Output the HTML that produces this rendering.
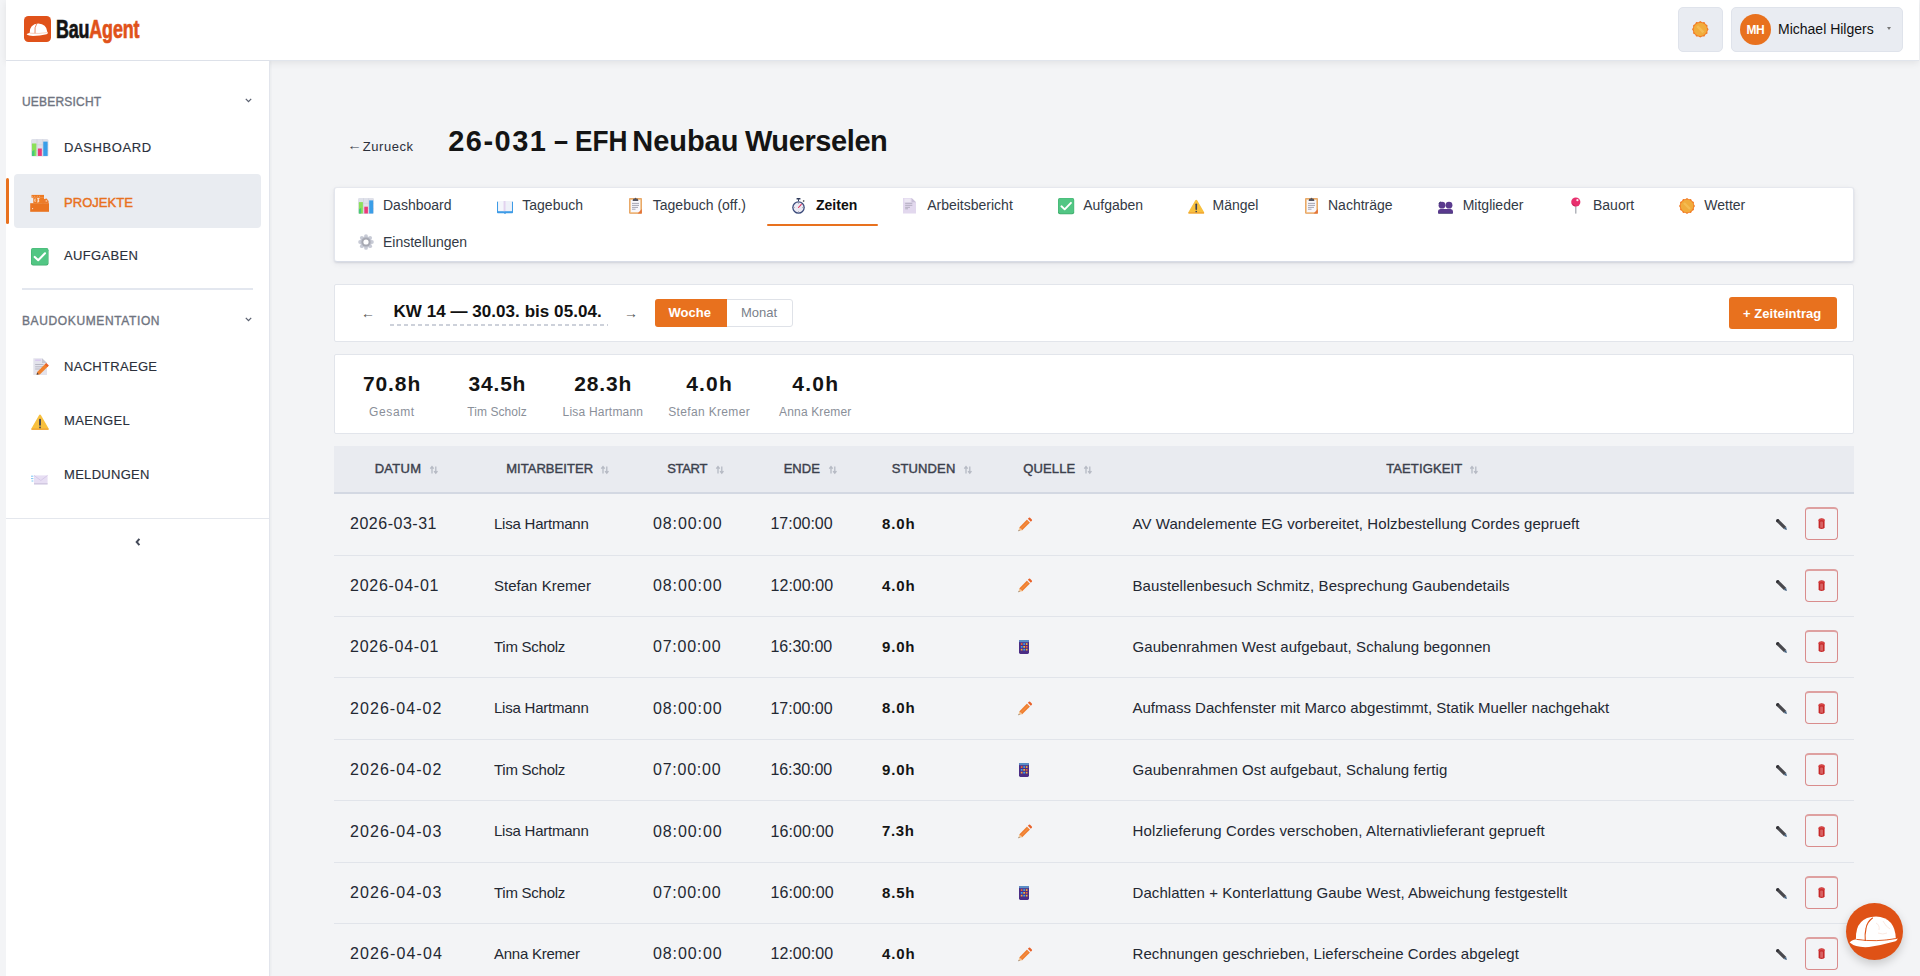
<!DOCTYPE html>
<html><head><meta charset="utf-8">
<style>
*{box-sizing:border-box;margin:0;padding:0}
html,body{width:1920px;height:976px;overflow:hidden;background:#f3f4f6;font-family:"Liberation Sans",sans-serif;color:#1f2937}
.abs{position:absolute}
.t{position:absolute;white-space:nowrap}
svg{position:absolute;overflow:visible}
#header{position:absolute;left:6px;top:0;width:1913px;height:61px;background:#fff;border-bottom:1px solid #e1e5ec;box-shadow:0 2px 7px rgba(0,0,0,.075);z-index:5}
#sidebar{position:absolute;left:6px;top:61px;width:264px;height:915px;background:#fff;border-right:1px solid #e2e5ec;box-shadow:1px 0 2px rgba(40,50,80,.05);z-index:6}
.card{position:absolute;background:#fff;border:1px solid #e2e5eb;border-radius:2px}
</style></head><body>
<div id="header"></div>
<div class="abs" style="z-index:6;left:0;top:0;width:1920px;height:61px">
<svg style="left:24px;top:16px" width="27" height="26" viewBox="0 0 27 26">
<rect x="0" y="0" width="27" height="26" rx="4.5" fill="#e0521a"/>
<path d="M5.6 17.2 Q5.4 8.2 14.4 7.6 Q22.4 8 23.2 15.6 L23.4 17 Q14 18.2 5.6 17.2Z" fill="#fff"/>
<path d="M2.6 18.6 Q3.2 17.2 5.8 17 Q15 18 23.9 16.3 Q24.2 17.6 22.6 18.3 Q16 19.9 9 19.9 Q4.6 19.9 2.6 18.6Z" fill="#fff"/>
<path d="M12.6 8 Q10.4 10.8 11 17.3" stroke="#e0521a" stroke-width=".7" fill="none"/>
<path d="M5.8 17.1 Q15 18.1 23.6 16.5" stroke="#f3b08f" stroke-width=".5" fill="none"/>
</svg>
<div class="t" style="left:56px;top:14.5px;font-size:25px;line-height:28px;font-weight:bold;transform:scaleX(.715);transform-origin:0 0;letter-spacing:-.2px;-webkit-text-stroke:.7px currentColor"><span style="color:#141414;-webkit-text-stroke:.7px #141414">Bau</span><span style="color:#e0521a;-webkit-text-stroke:.7px #e0521a">Agent</span></div>
<div class="abs" style="left:1678px;top:7px;width:45px;height:45px;background:#e9ecf2;border:1px solid #dfe3eb;border-radius:5px"></div>
<svg style="left:1692.2px;top:20.6px" width="16.6" height="16.6" viewBox="0 0 16 16"><polygon points="8.00,0.00 9.84,1.14 12.00,1.07 13.02,2.98 14.93,4.00 14.86,6.16 16.00,8.00 14.86,9.84 14.93,12.00 13.02,13.02 12.00,14.93 9.84,14.86 8.00,16.00 6.16,14.86 4.00,14.93 2.98,13.02 1.07,12.00 1.14,9.84 0.00,8.00 1.14,6.16 1.07,4.00 2.98,2.98 4.00,1.07 6.16,1.14" fill="#f27b24"/><circle cx="8" cy="8" r="6.4" fill="#f1ac3c"/><path d="M5 5 L11 11" stroke="#f8c862" stroke-width="2.4" opacity=".6"/></svg>

<div class="abs" style="left:1731px;top:7px;width:172px;height:45px;background:#e9ecf2;border:1px solid #dfe3eb;border-radius:5px"></div>
<div class="abs" style="left:1740px;top:14px;width:31px;height:31px;border-radius:50%;background:#e8711e"></div>
<div class="t" style="left:1605.5px;width:300px;text-align:center;top:23.84px;font-size:12px;line-height:12px;font-weight:bold;letter-spacing:-0.5px;text-indent:-0.5px;color:#fff;">MH</div>
<div class="t" style="left:1778px;top:22.15px;font-size:14px;line-height:14px;color:#111;">Michael Hilgers</div>
<div class="abs" style="left:1886.5px;top:27px;width:0;height:0;border-left:2.6px solid transparent;border-right:2.6px solid transparent;border-top:3.2px solid #777"></div>
</div>
<div id="sidebar"></div>
<div class="abs" style="z-index:6;left:0;top:0;width:270px;height:976px">
<div class="t" style="left:22px;top:96.14px;font-size:12px;line-height:12px;letter-spacing:0.2px;color:#6f7480;-webkit-text-stroke:.35px #6f7480">UEBERSICHT</div>
<div class="t" style="left:22px;top:315.14px;font-size:12px;line-height:12px;letter-spacing:0.62px;color:#6f7480;-webkit-text-stroke:.35px #6f7480">BAUDOKUMENTATION</div>
<svg style="left:245px;top:98px" width="7" height="5" viewBox="0 0 7 5"><path d="M0.8 0.9 L3.5 3.6 L6.2 0.9" stroke="#5b6170" stroke-width="1.3" fill="none"/></svg>
<svg style="left:245px;top:317px" width="7" height="5" viewBox="0 0 7 5"><path d="M0.8 0.9 L3.5 3.6 L6.2 0.9" stroke="#5b6170" stroke-width="1.3" fill="none"/></svg>
<div class="abs" style="left:14px;top:174px;width:247px;height:54px;background:#e9ecf1;border-radius:4px"></div>
<div class="abs" style="left:6px;top:178px;width:3px;height:46px;background:#e8711e;border-radius:2px"></div>
<div class="t" style="left:64px;top:141.19px;font-size:13px;line-height:13px;letter-spacing:0.6px;color:#2b303b;-webkit-text-stroke:.15px #2b303b">DASHBOARD</div>
<div class="t" style="left:64px;top:195.99px;font-size:13px;line-height:13px;letter-spacing:0.05px;color:#e8711e;-webkit-text-stroke:.45px #e8711e">PROJEKTE</div>
<div class="t" style="left:64px;top:249.29px;font-size:13px;line-height:13px;letter-spacing:0.35px;color:#2b303b;-webkit-text-stroke:.15px #2b303b">AUFGABEN</div>
<div class="t" style="left:64px;top:359.59px;font-size:13px;line-height:13px;letter-spacing:0.3px;color:#2b303b;-webkit-text-stroke:.15px #2b303b">NACHTRAEGE</div>
<div class="t" style="left:64px;top:413.99px;font-size:13px;line-height:13px;letter-spacing:0.35px;color:#2b303b;-webkit-text-stroke:.15px #2b303b">MAENGEL</div>
<div class="t" style="left:64px;top:467.99px;font-size:13px;line-height:13px;letter-spacing:0.3px;color:#2b303b;-webkit-text-stroke:.15px #2b303b">MELDUNGEN</div>
<div class="abs" style="left:22px;top:288px;width:231px;height:2px;background:#e3e7ef"></div>
<div class="abs" style="left:6px;top:518px;width:263px;height:1px;background:#e4e7ed"></div>
<svg style="left:135px;top:538px" width="6" height="8" viewBox="0 0 6 8"><path d="M4.4 0.9 L1.7 4 L4.4 7.1" stroke="#454b5a" stroke-width="2" fill="none"/></svg>
<svg style="left:31px;top:138.7px" width="17.5" height="17.5" viewBox="0 0 16 16"><rect x="0" y="0" width="16" height="16" rx="1.4" fill="#dfe1ea"/><path d="M0.3 5.3H15.7M0.3 10.6H15.7M5.5 0.3V15.7M10.7 0.3V15.7" stroke="#c9ccd8" stroke-width=".5"/><rect x="0.9" y="4.1" width="4" height="11.4" fill="#8be05a"/><path d="M0.9 15.5V11.5L3.2 9.8V15.5Z" fill="#46c97a"/><rect x="6.3" y="8.7" width="3.6" height="6.8" fill="#ec3a78"/><rect x="11.2" y="2.4" width="4" height="13.1" fill="#3a9ee8"/></svg>
<svg style="left:30px;top:195px" width="19" height="17" viewBox="0 0 19 17"><rect x="0.2" y="8.2" width="18.8" height="8.6" fill="#ea7420"/><rect x="1.5" y="-0.1" width="12.5" height="2.8" fill="#ee7a22"/><rect x="3.3" y="2.5" width="10.7" height="5.9" fill="#ee7c24"/><path d="M12 8.4 V4.6 L16.6 3.4 L18.6 6 V8.4Z" fill="#ec7a2a"/><path d="M5.2 3.6 Q4.4 5.2 5.2 6.8 M7.2 3.6 H9.2 L7.6 5.2 Q9.6 5.2 8.6 6.9 L7.1 6.9" stroke="#fff" stroke-width=".85" fill="none"/><circle cx="2.4" cy="1.2" r=".45" fill="#fff" opacity=".6"/><circle cx="4.8" cy="1.2" r=".45" fill="#fff" opacity=".6"/><circle cx="7.2" cy="1.2" r=".45" fill="#fff" opacity=".6"/><circle cx="9.6" cy="1.2" r=".45" fill="#fff" opacity=".6"/><circle cx="2.4" cy="4.4" r=".45" fill="#fff" opacity=".5"/><circle cx="2.4" cy="7.4" r=".45" fill="#fff" opacity=".5"/><circle cx="2.6" cy="13.6" r=".6" fill="#fff" opacity=".8"/><rect x="15.6" y="5.2" width="1.6" height="1.4" fill="#f5c9a8"/></svg>
<svg style="left:31px;top:247.8px" width="17.5" height="17.5" viewBox="0 0 16 16"><rect x="0" y="0" width="16" height="16" rx="2" fill="#3eaa6a"/><rect x="0.4" y="0.2" width="15.2" height="15" rx="1.8" fill="#52c684"/><path d="M3.4 8.2 L6.6 11.2 L12.8 4.8" stroke="#fff" stroke-width="1.9" fill="none" stroke-linecap="round" stroke-linejoin="round"/></svg>
<svg style="left:33px;top:357.5px" width="16" height="17.5" viewBox="0 0 16 17.5"><path d="M0.3 0.3 H9 L14 5 V17 H0.3Z" fill="#e3e3ec"/><path d="M9 0.3 V5 H14Z" fill="#c6c6d2"/><path d="M2.2 6.5 H10.5 M2.2 8.8 H10.5 M2.2 11 H7" stroke="#b3b3c0" stroke-width=".9"/><path d="M2.2 2.2 H8" stroke="#d8c9ef" stroke-width="1.5"/><path d="M3.6 16.6 L4.2 14 L12.6 5.6 L15.2 8.2 L6.8 16.6Z" fill="#f0822e"/><path d="M11.8 6.4 L13.3 4.9 L15.9 7.5 L14.4 9Z" fill="#e8602a"/><path d="M3.6 16.8 L4.2 14.6 L5.8 16.2Z" fill="#444"/></svg>
<svg style="left:31px;top:413.7px" width="18" height="16" viewBox="0 0 18 16"><path d="M9 0.6 Q9.6 0.6 10 1.3 L17.6 14.4 Q18 15.7 16.8 15.7 H1.2 Q0 15.7 0.4 14.4 L8 1.3 Q8.4 0.6 9 0.6Z" fill="#f8c03e"/><path d="M0.6 14.4 H17.4 L17.6 15.7 H0.4Z" fill="#f0a232"/><rect x="8.1" y="4.8" width="1.8" height="7" rx=".8" fill="#3a3f55"/><rect x="8.1" y="12.6" width="1.8" height="1.8" rx=".8" fill="#3a3f55"/></svg>
<svg style="left:31px;top:474.5px" width="17" height="10" viewBox="0 0 17 10"><path d="M3 0.4 H16.6 V9.2 H3Z" fill="#e7def3"/><path d="M3 0.4 L9.8 5.5 L16.6 0.4" stroke="#cfc2e3" stroke-width=".7" fill="none"/><rect x="3" y="8.4" width="13.6" height="1" fill="#c4bcd6"/><path d="M0 1.2 H2.4 M0 3.6 H2.4 M0.5 6 H2.4" stroke="#7cc4f2" stroke-width="1"/></svg>

</div>
<div class="t" style="left:347.3px;top:139.39px;font-size:13px;line-height:13px;color:#3a3f4b;transform:scaleX(1.12);transform-origin:0 0">&#8592;</div>
<div class="t" style="left:362.8px;top:140.09px;font-size:13px;line-height:13px;letter-spacing:0.55px;color:#2b303b;">Zurueck</div>
<div class="t" style="left:448.2px;top:126.85px;font-size:29px;line-height:29px;font-weight:bold;letter-spacing:1.5px;color:#141414;">26-031</div>
<div class="t" style="left:554.1px;top:126.85px;font-size:29px;line-height:29px;font-weight:bold;color:#141414;transform:scaleX(.87);transform-origin:0 0">–</div>
<div class="t" style="left:574.6px;top:126.85px;font-size:29px;line-height:29px;font-weight:bold;color:#141414;transform:scaleX(.905);transform-origin:0 0">EFH</div>
<div class="t" style="left:632.3px;top:126.85px;font-size:29px;line-height:29px;font-weight:bold;letter-spacing:-0.05px;color:#141414;">Neubau</div>
<div class="t" style="left:744.9px;top:126.85px;font-size:29px;line-height:29px;font-weight:bold;letter-spacing:-0.4px;color:#141414;">Wuerselen</div>
<div class="card" style="left:334px;top:187px;width:1520px;height:75px;border-color:#e6e8ee #e3e6ed #d8dce6;border-radius:3px;box-shadow:0 1px 2px rgba(30,40,70,.12),0 2px 6px rgba(30,40,70,.06)"></div>
<div class="t" style="left:383px;top:198.45px;font-size:14px;line-height:14px;color:#333a45;">Dashboard</div>
<div class="t" style="left:522.3px;top:198.45px;font-size:14px;line-height:14px;color:#333a45;">Tagebuch</div>
<div class="t" style="left:652.8px;top:198.45px;font-size:14px;line-height:14px;color:#333a45;">Tagebuch (off.)</div>
<div class="t" style="left:816px;top:198.45px;font-size:14px;line-height:14px;font-weight:bold;color:#111;">Zeiten</div>
<div class="t" style="left:927.2px;top:198.45px;font-size:14px;line-height:14px;color:#333a45;">Arbeitsbericht</div>
<div class="t" style="left:1083.2px;top:198.45px;font-size:14px;line-height:14px;color:#333a45;">Aufgaben</div>
<div class="t" style="left:1212.5px;top:198.45px;font-size:14px;line-height:14px;color:#333a45;">Mängel</div>
<div class="t" style="left:1328px;top:198.45px;font-size:14px;line-height:14px;color:#333a45;">Nachträge</div>
<div class="t" style="left:1462.7px;top:198.45px;font-size:14px;line-height:14px;color:#333a45;">Mitglieder</div>
<div class="t" style="left:1593px;top:198.45px;font-size:14px;line-height:14px;color:#333a45;">Bauort</div>
<div class="t" style="left:1704.3px;top:198.45px;font-size:14px;line-height:14px;color:#333a45;">Wetter</div>
<div class="t" style="left:383px;top:235.05px;font-size:14px;line-height:14px;color:#333a45;">Einstellungen</div>
<div class="abs" style="left:767px;top:224px;width:111px;height:2px;background:#e8711e;border-radius:1px"></div>
<svg style="left:358px;top:197.5px" width="16" height="16" viewBox="0 0 16 16"><rect x="0" y="0" width="16" height="16" rx="1.4" fill="#dfe1ea"/><path d="M0.3 5.3H15.7M0.3 10.6H15.7M5.5 0.3V15.7M10.7 0.3V15.7" stroke="#c9ccd8" stroke-width=".5"/><rect x="0.9" y="4.1" width="4" height="11.4" fill="#8be05a"/><path d="M0.9 15.5V11.5L3.2 9.8V15.5Z" fill="#46c97a"/><rect x="6.3" y="8.7" width="3.6" height="6.8" fill="#ec3a78"/><rect x="11.2" y="2.4" width="4" height="13.1" fill="#3a9ee8"/></svg>
<svg style="left:497px;top:201.2px" width="16" height="13" viewBox="0 0 16 13"><path d="M0 1 Q0 0.4 .8 .4 L1.2 .4 V10 H14.8 V.4 L15.2 .4 Q16 .4 16 1 V11.6 Q16 12.2 15.2 12.2 H9 Q8.6 12.9 8 12.9 Q7.4 12.9 7 12.2 H.8 Q0 12.2 0 11.6Z" fill="#3d9be6"/><path d="M1.2 0 H7.6 V10.2 H1.2Z" fill="#f4f6fb"/><path d="M8.4 0 H14.8 V10.2 H8.4Z" fill="#eef1f8"/><rect x="6.6" y="0" width="2" height="10.2" fill="#e2d3ee"/></svg>
<svg style="left:629px;top:197.2px" width="13" height="17" viewBox="0 0 13 17"><rect x="0" y="1" width="13" height="15.8" rx="1.2" fill="#e39a58"/><rect x=".5" y="1.5" width="12" height="14.8" rx="1" fill="#f0b878"/><rect x="1.7" y="2.8" width="9.6" height="12.4" fill="#f7f7fc"/><path d="M3 6.4 H10 M3 8.4 H10 M3 10.4 H9 M3 12.2 H6.5" stroke="#9c9cab" stroke-width=".9"/><path d="M3.6 4 L4.2 1.8 H5.4 Q6.5 -.4 7.6 1.8 H8.8 L9.4 4Z" fill="#55555f"/><path d="M8.6 16.6 L12.8 12 V16.6Z" fill="#e3743a"/></svg>
<svg style="left:792.3px;top:198px" width="13" height="16" viewBox="0 0 13 16"><rect x="4.5" y="0" width="4" height="1.4" rx=".5" fill="#2f3a5a"/><rect x="6" y="1.2" width="1" height="2" fill="#2f3a5a"/><path d="M10.6 3 L11.8 2 L12.6 3 L11.6 4Z" fill="#444"/><circle cx="6.5" cy="9.5" r="6.3" fill="#3a4a7a"/><circle cx="6.5" cy="9.5" r="5" fill="#eceaf4"/><path d="M6.5 9.5 L9.3 6.3" stroke="#e5345f" stroke-width="1.1" stroke-linecap="round"/><path d="M6.5 5.2V5.9M6.5 13.1V13.8M2.2 9.5H2.9M10.1 9.5H10.8" stroke="#555" stroke-width=".5"/></svg>
<svg style="left:903.4px;top:198px" width="13" height="16" viewBox="0 0 13 16"><path d="M0 0 H8.6 L13 4.2 V15.6 H0Z" fill="#e2d8ee"/><path d="M8.6 0 V4.2 H13Z" fill="#c9c0d8"/><rect x="1.4" y="0.6" width="6.2" height="3.6" fill="#ede8f4"/><path d="M2.2 5.3 H9.3 M2.2 7.3 H9.3 M2.2 9.3 H7 M2.2 10.8 H5" stroke="#a9a6b6" stroke-width=".85"/></svg>
<svg style="left:1057.7px;top:198px" width="16.2" height="16.2" viewBox="0 0 16 16"><rect x="0" y="0" width="16" height="16" rx="2" fill="#3eaa6a"/><rect x="0.4" y="0.2" width="15.2" height="15" rx="1.8" fill="#52c684"/><path d="M3.4 8.2 L6.6 11.2 L12.8 4.8" stroke="#fff" stroke-width="1.9" fill="none" stroke-linecap="round" stroke-linejoin="round"/></svg>
<svg style="left:1187.5px;top:198.5px" width="16.5" height="15" viewBox="0 0 18 16"><path d="M9 0.6 Q9.6 0.6 10 1.3 L17.6 14.4 Q18 15.7 16.8 15.7 H1.2 Q0 15.7 0.4 14.4 L8 1.3 Q8.4 0.6 9 0.6Z" fill="#f8c03e"/><path d="M0.6 14.4 H17.4 L17.6 15.7 H0.4Z" fill="#f0a232"/><rect x="8.1" y="4.8" width="1.8" height="7" rx=".8" fill="#3a3f55"/><rect x="8.1" y="12.6" width="1.8" height="1.8" rx=".8" fill="#3a3f55"/></svg>
<svg style="left:1305px;top:197.2px" width="13" height="17" viewBox="0 0 13 17"><rect x="0" y="1" width="13" height="15.8" rx="1.2" fill="#e39a58"/><rect x=".5" y="1.5" width="12" height="14.8" rx="1" fill="#f0b878"/><rect x="1.7" y="2.8" width="9.6" height="12.4" fill="#f7f7fc"/><path d="M3 6.4 H10 M3 8.4 H10 M3 10.4 H9 M3 12.2 H6.5" stroke="#9c9cab" stroke-width=".9"/><path d="M3.6 4 L4.2 1.8 H5.4 Q6.5 -.4 7.6 1.8 H8.8 L9.4 4Z" fill="#55555f"/><path d="M8.6 16.6 L12.8 12 V16.6Z" fill="#e3743a"/></svg>
<svg style="left:1437.8px;top:201px" width="15" height="13" viewBox="0 0 15 13"><circle cx="4" cy="4.2" r="3.4" fill="#5a3a8e"/><circle cx="11" cy="4.2" r="3.4" fill="#5a3a8e"/><path d="M0 12.6 V10.2 Q0 8.2 2.4 8 H12.6 Q15 8.2 15 10.2 V12.6Z" fill="#5a3a8e"/><path d="M0.6 12.4 H14.4" stroke="#2e2f5c" stroke-width=".6"/><path d="M1 3 Q1 1 3 .9" stroke="#2f2f5f" stroke-width=".8" fill="none"/></svg>
<svg style="left:1571.4px;top:197px" width="10" height="17" viewBox="0 0 10 17"><rect x="4.2" y="8" width="1.2" height="8.6" fill="#9fa2ab"/><circle cx="4.8" cy="5" r="4.6" fill="#e8306e"/><circle cx="6.4" cy="3.2" r="1.1" fill="#fbe9ef"/><path d="M1.2 6.6 Q2.2 8.6 4.2 9" stroke="#b8234f" stroke-width=".8" fill="none"/></svg>
<svg style="left:1679px;top:197.7px" width="16" height="16" viewBox="0 0 16 16"><polygon points="8.00,0.00 9.84,1.14 12.00,1.07 13.02,2.98 14.93,4.00 14.86,6.16 16.00,8.00 14.86,9.84 14.93,12.00 13.02,13.02 12.00,14.93 9.84,14.86 8.00,16.00 6.16,14.86 4.00,14.93 2.98,13.02 1.07,12.00 1.14,9.84 0.00,8.00 1.14,6.16 1.07,4.00 2.98,2.98 4.00,1.07 6.16,1.14" fill="#f27b24"/><circle cx="8" cy="8" r="6.4" fill="#f1ac3c"/><path d="M5 5 L11 11" stroke="#f8c862" stroke-width="2.4" opacity=".6"/></svg>
<svg style="left:358px;top:234px" width="16" height="16" viewBox="0 0 16 16"><circle cx="13.90" cy="8.00" r="1.9" fill="#c8cbd6"/><circle cx="12.17" cy="12.17" r="1.9" fill="#c8cbd6"/><circle cx="8.00" cy="13.90" r="1.9" fill="#c8cbd6"/><circle cx="3.83" cy="12.17" r="1.9" fill="#c8cbd6"/><circle cx="2.10" cy="8.00" r="1.9" fill="#c8cbd6"/><circle cx="3.83" cy="3.83" r="1.9" fill="#c8cbd6"/><circle cx="8.00" cy="2.10" r="1.9" fill="#c8cbd6"/><circle cx="12.17" cy="3.83" r="1.9" fill="#c8cbd6"/><circle cx="8" cy="8" r="5.8" fill="#c4c7d2"/><circle cx="8" cy="8" r="4.6" fill="#a6a8b2"/><circle cx="8" cy="8" r="2.6" fill="#fff"/></svg>

<div class="card" style="left:334px;top:284px;width:1520px;height:58px"></div>
<div class="t" style="left:361px;top:306.15px;font-size:14px;line-height:14px;color:#555;">&#8592;</div>
<div class="t" style="left:393.5px;top:302.91px;font-size:17px;line-height:17px;font-weight:bold;letter-spacing:0.05px;color:#111;">KW 14 — 30.03. bis 05.04.</div>
<div class="abs" style="left:390px;top:323.5px;width:218px;height:2px;background:repeating-linear-gradient(90deg,#cdd1da 0 4px,transparent 4px 7px)"></div>
<div class="t" style="left:624px;top:306.15px;font-size:14px;line-height:14px;color:#555;">&#8594;</div>
<div class="abs" style="left:655px;top:299px;width:138px;height:28px;border:1px solid #dfe2e8;border-radius:3px;background:#fff"></div>
<div class="abs" style="left:655px;top:299px;width:72px;height:28px;background:#e8711e;border-radius:3px 0 0 3px"></div>
<div class="t" style="left:668.5px;top:306.49px;font-size:13px;line-height:13px;font-weight:bold;color:#fff;">Woche</div>
<div class="t" style="left:741px;top:306.49px;font-size:13px;line-height:13px;color:#7a7f8a;">Monat</div>
<div class="abs" style="left:1729px;top:297px;width:108px;height:32px;background:#e8711e;border-radius:3px"></div>
<div class="t" style="left:1743px;top:307.29px;font-size:13px;line-height:13px;font-weight:bold;letter-spacing:0.05px;color:#fff;">+ Zeiteintrag</div>
<div class="card" style="left:334px;top:354px;width:1520px;height:80px"></div>
<div class="t" style="left:241.60000000000002px;width:300px;text-align:center;top:373.02px;font-size:21px;line-height:21px;font-weight:bold;letter-spacing:0.9px;text-indent:0.9px;color:#141414;">70.8h</div>
<div class="t" style="left:241.60000000000002px;width:300px;text-align:center;top:405.54px;font-size:12px;line-height:12px;letter-spacing:0.6px;text-indent:0.6px;color:#8a8f99;">Gesamt</div>
<div class="t" style="left:347px;width:300px;text-align:center;top:373.02px;font-size:21px;line-height:21px;font-weight:bold;letter-spacing:0.8px;text-indent:0.8px;color:#141414;">34.5h</div>
<div class="t" style="left:347px;width:300px;text-align:center;top:405.54px;font-size:12px;line-height:12px;letter-spacing:0.07px;text-indent:0.07px;color:#8a8f99;">Tim Scholz</div>
<div class="t" style="left:452.79999999999995px;width:300px;text-align:center;top:373.02px;font-size:21px;line-height:21px;font-weight:bold;letter-spacing:0.8px;text-indent:0.8px;color:#141414;">28.3h</div>
<div class="t" style="left:452.79999999999995px;width:300px;text-align:center;top:405.54px;font-size:12px;line-height:12px;letter-spacing:0.2px;text-indent:0.2px;color:#8a8f99;">Lisa Hartmann</div>
<div class="t" style="left:559px;width:300px;text-align:center;top:373.02px;font-size:21px;line-height:21px;font-weight:bold;letter-spacing:1.2px;text-indent:1.2px;color:#141414;">4.0h</div>
<div class="t" style="left:559px;width:300px;text-align:center;top:405.54px;font-size:12px;line-height:12px;letter-spacing:0.34px;text-indent:0.34px;color:#8a8f99;">Stefan Kremer</div>
<div class="t" style="left:665.2px;width:300px;text-align:center;top:373.02px;font-size:21px;line-height:21px;font-weight:bold;letter-spacing:1.2px;text-indent:1.2px;color:#141414;">4.0h</div>
<div class="t" style="left:665.2px;width:300px;text-align:center;top:405.54px;font-size:12px;line-height:12px;letter-spacing:0.15px;text-indent:0.15px;color:#8a8f99;">Anna Kremer</div>
<div class="abs" style="left:334px;top:445.6px;width:1520px;height:48.4px;background:#e9ebf0;border-bottom:2px solid #d3d8e2"></div>
<div class="t" style="left:374.7px;top:462.29px;font-size:13px;line-height:13px;letter-spacing:0.26px;color:#3b404c;-webkit-text-stroke:.4px #3b404c">DATUM</div>
<div class="t" style="left:506.2px;top:462.29px;font-size:13px;line-height:13px;letter-spacing:0.04px;color:#3b404c;-webkit-text-stroke:.4px #3b404c">MITARBEITER</div>
<div class="t" style="left:667.2px;top:462.29px;font-size:13px;line-height:13px;letter-spacing:-0.3px;color:#3b404c;-webkit-text-stroke:.4px #3b404c">START</div>
<div class="t" style="left:783.7px;top:462.29px;font-size:13px;line-height:13px;color:#3b404c;-webkit-text-stroke:.4px #3b404c">ENDE</div>
<div class="t" style="left:891.7px;top:462.29px;font-size:13px;line-height:13px;letter-spacing:0.13px;color:#3b404c;-webkit-text-stroke:.4px #3b404c">STUNDEN</div>
<div class="t" style="left:1023.2px;top:462.29px;font-size:13px;line-height:13px;letter-spacing:0.16px;color:#3b404c;-webkit-text-stroke:.4px #3b404c">QUELLE</div>
<div class="t" style="left:1386.2px;top:462.29px;font-size:13px;line-height:13px;letter-spacing:0.12px;color:#3b404c;-webkit-text-stroke:.4px #3b404c">TAETIGKEIT</div>
<svg style="left:430px;top:465.8px" width="8" height="7.6" viewBox="0 0 8 7.6"><path d="M2 7.4 V1.4 M0.3 2.6 L2 .6 L3.7 2.6" stroke="#b6bac4" stroke-width="1.3" fill="none"/><path d="M5.8 .4 V6.4 M4.1 5.2 L5.8 7.2 L7.5 5.2" stroke="#b6bac4" stroke-width="1.3" fill="none"/></svg>
<svg style="left:600.8px;top:465.8px" width="8" height="7.6" viewBox="0 0 8 7.6"><path d="M2 7.4 V1.4 M0.3 2.6 L2 .6 L3.7 2.6" stroke="#b6bac4" stroke-width="1.3" fill="none"/><path d="M5.8 .4 V6.4 M4.1 5.2 L5.8 7.2 L7.5 5.2" stroke="#b6bac4" stroke-width="1.3" fill="none"/></svg>
<svg style="left:715.9px;top:465.8px" width="8" height="7.6" viewBox="0 0 8 7.6"><path d="M2 7.4 V1.4 M0.3 2.6 L2 .6 L3.7 2.6" stroke="#b6bac4" stroke-width="1.3" fill="none"/><path d="M5.8 .4 V6.4 M4.1 5.2 L5.8 7.2 L7.5 5.2" stroke="#b6bac4" stroke-width="1.3" fill="none"/></svg>
<svg style="left:828.5px;top:465.8px" width="8" height="7.6" viewBox="0 0 8 7.6"><path d="M2 7.4 V1.4 M0.3 2.6 L2 .6 L3.7 2.6" stroke="#b6bac4" stroke-width="1.3" fill="none"/><path d="M5.8 .4 V6.4 M4.1 5.2 L5.8 7.2 L7.5 5.2" stroke="#b6bac4" stroke-width="1.3" fill="none"/></svg>
<svg style="left:964.4px;top:465.8px" width="8" height="7.6" viewBox="0 0 8 7.6"><path d="M2 7.4 V1.4 M0.3 2.6 L2 .6 L3.7 2.6" stroke="#b6bac4" stroke-width="1.3" fill="none"/><path d="M5.8 .4 V6.4 M4.1 5.2 L5.8 7.2 L7.5 5.2" stroke="#b6bac4" stroke-width="1.3" fill="none"/></svg>
<svg style="left:1083.6px;top:465.8px" width="8" height="7.6" viewBox="0 0 8 7.6"><path d="M2 7.4 V1.4 M0.3 2.6 L2 .6 L3.7 2.6" stroke="#b6bac4" stroke-width="1.3" fill="none"/><path d="M5.8 .4 V6.4 M4.1 5.2 L5.8 7.2 L7.5 5.2" stroke="#b6bac4" stroke-width="1.3" fill="none"/></svg>
<svg style="left:1469.5px;top:465.8px" width="8" height="7.6" viewBox="0 0 8 7.6"><path d="M2 7.4 V1.4 M0.3 2.6 L2 .6 L3.7 2.6" stroke="#b6bac4" stroke-width="1.3" fill="none"/><path d="M5.8 .4 V6.4 M4.1 5.2 L5.8 7.2 L7.5 5.2" stroke="#b6bac4" stroke-width="1.3" fill="none"/></svg>

<div class="abs" style="left:334px;top:554.60px;width:1520px;height:1px;background:#e1e4ea"></div>
<div class="t" style="left:350px;top:516.45px;font-size:16px;line-height:16px;letter-spacing:0.51px;color:#232832;">2026-03-31</div>
<div class="t" style="left:494px;top:516.10px;font-size:15px;line-height:15px;letter-spacing:-0.23px;color:#232832;">Lisa Hartmann</div>
<div class="t" style="left:653px;top:516.45px;font-size:16px;line-height:16px;letter-spacing:0.9px;color:#232832;">08:00:00</div>
<div class="t" style="left:770.5px;top:516.45px;font-size:16px;line-height:16px;letter-spacing:-0.03px;color:#232832;">17:00:00</div>
<div class="t" style="left:882px;top:516.10px;font-size:15px;line-height:15px;font-weight:bold;letter-spacing:0.9px;color:#141414;">8.0h</div>
<div class="t" style="left:1132.5px;top:516.10px;font-size:15px;line-height:15px;letter-spacing:0.07px;color:#232832;">AV Wandelemente EG vorbereitet, Holzbestellung Cordes geprueft</div>
<svg style="left:1016.8px;top:517.0px" width="15.5" height="15.5" viewBox="0 0 15.5 15.5"><g transform="translate(0.3,0.3)"><path d="M4.9 13.06 L1.94 10.1 L9.72 2.32 L12.68 5.28Z" fill="#ef7d2e"/><path d="M3.4 11.6 L11.2 3.8" stroke="#f59a52" stroke-width=".9"/><path d="M9.72 2.32 L10.57 1.47 L13.53 4.43 L12.68 5.28Z" fill="#f1eef4"/><path d="M10.57 1.47 L11.6 .44 Q12.2 -.1 12.8 .5 L14.5 2.2 Q15.1 2.8 14.56 3.4 L13.53 4.43Z" fill="#e8622a"/><path d="M4.9 13.06 L1.94 10.1 L1.0 14.0Z" fill="#f3c594"/><path d="M1.6 12.6 L2.4 13.4 L1.0 14.0Z" fill="#555"/></g></svg>
<svg style="left:1775.5px;top:519.0px" width="11" height="11" viewBox="0 0 11 11"><path d="M0.2 2.5 L2.5 0.2 L10.1 7.8 L7.8 10.1Z" fill="#48484d"/><path d="M0.2 2.5 Q-.3 1.2 .5 .5 Q1.2 -.3 2.5 .2 L3.3 1 L1 3.3Z" fill="#2e2e33"/><path d="M7.8 10.1 L10.1 7.8 L10.9 10.9Z" fill="#3a5a7a"/></svg>
<svg style="left:1817.6px;top:518.4px" width="7.2" height="11" viewBox="0 0 7.2 11"><path d="M0.6 2 Q0.6 .2 3.6 .2 Q6.6 .2 6.6 2 V9.6 Q6.6 10.9 3.6 10.9 Q0.6 10.9 0.6 9.6Z" fill="#c62828"/><path d="M0.2 2.2 Q0.6 .9 3.6 .9 Q6.6 .9 7 2.2 L6.8 2.7 Q3.6 2 .4 2.7Z" fill="#d94a4a"/><rect x="2.2" y="3.4" width="2.8" height="6.4" rx=".6" fill="#dd7777" opacity=".75"/></svg>

<div class="abs" style="left:1805px;top:507.20px;width:33px;height:33px;border:1px solid #d98c8c;border-top:2px solid #dea0a0;border-radius:4px"></div>
<div class="abs" style="left:334px;top:616.02px;width:1520px;height:1px;background:#e1e4ea"></div>
<div class="t" style="left:350px;top:577.87px;font-size:16px;line-height:16px;letter-spacing:0.73px;color:#232832;">2026-04-01</div>
<div class="t" style="left:494px;top:577.52px;font-size:15px;line-height:15px;letter-spacing:0.02px;color:#232832;">Stefan Kremer</div>
<div class="t" style="left:653px;top:577.87px;font-size:16px;line-height:16px;letter-spacing:0.9px;color:#232832;">08:00:00</div>
<div class="t" style="left:770.5px;top:577.87px;font-size:16px;line-height:16px;letter-spacing:0.04px;color:#232832;">12:00:00</div>
<div class="t" style="left:882px;top:577.52px;font-size:15px;line-height:15px;font-weight:bold;letter-spacing:0.9px;color:#141414;">4.0h</div>
<div class="t" style="left:1132.5px;top:577.52px;font-size:15px;line-height:15px;letter-spacing:0.07px;color:#232832;">Baustellenbesuch Schmitz, Besprechung Gaubendetails</div>
<svg style="left:1016.8px;top:578.42px" width="15.5" height="15.5" viewBox="0 0 15.5 15.5"><g transform="translate(0.3,0.3)"><path d="M4.9 13.06 L1.94 10.1 L9.72 2.32 L12.68 5.28Z" fill="#ef7d2e"/><path d="M3.4 11.6 L11.2 3.8" stroke="#f59a52" stroke-width=".9"/><path d="M9.72 2.32 L10.57 1.47 L13.53 4.43 L12.68 5.28Z" fill="#f1eef4"/><path d="M10.57 1.47 L11.6 .44 Q12.2 -.1 12.8 .5 L14.5 2.2 Q15.1 2.8 14.56 3.4 L13.53 4.43Z" fill="#e8622a"/><path d="M4.9 13.06 L1.94 10.1 L1.0 14.0Z" fill="#f3c594"/><path d="M1.6 12.6 L2.4 13.4 L1.0 14.0Z" fill="#555"/></g></svg>
<svg style="left:1775.5px;top:580.42px" width="11" height="11" viewBox="0 0 11 11"><path d="M0.2 2.5 L2.5 0.2 L10.1 7.8 L7.8 10.1Z" fill="#48484d"/><path d="M0.2 2.5 Q-.3 1.2 .5 .5 Q1.2 -.3 2.5 .2 L3.3 1 L1 3.3Z" fill="#2e2e33"/><path d="M7.8 10.1 L10.1 7.8 L10.9 10.9Z" fill="#3a5a7a"/></svg>
<svg style="left:1817.6px;top:579.8199999999999px" width="7.2" height="11" viewBox="0 0 7.2 11"><path d="M0.6 2 Q0.6 .2 3.6 .2 Q6.6 .2 6.6 2 V9.6 Q6.6 10.9 3.6 10.9 Q0.6 10.9 0.6 9.6Z" fill="#c62828"/><path d="M0.2 2.2 Q0.6 .9 3.6 .9 Q6.6 .9 7 2.2 L6.8 2.7 Q3.6 2 .4 2.7Z" fill="#d94a4a"/><rect x="2.2" y="3.4" width="2.8" height="6.4" rx=".6" fill="#dd7777" opacity=".75"/></svg>

<div class="abs" style="left:1805px;top:568.62px;width:33px;height:33px;border:1px solid #d98c8c;border-top:2px solid #dea0a0;border-radius:4px"></div>
<div class="abs" style="left:334px;top:677.44px;width:1520px;height:1px;background:#e1e4ea"></div>
<div class="t" style="left:350px;top:639.29px;font-size:16px;line-height:16px;letter-spacing:0.73px;color:#232832;">2026-04-01</div>
<div class="t" style="left:494px;top:638.94px;font-size:15px;line-height:15px;letter-spacing:-0.26px;color:#232832;">Tim Scholz</div>
<div class="t" style="left:653px;top:639.29px;font-size:16px;line-height:16px;letter-spacing:0.76px;color:#232832;">07:00:00</div>
<div class="t" style="left:770.5px;top:639.29px;font-size:16px;line-height:16px;letter-spacing:-0.1px;color:#232832;">16:30:00</div>
<div class="t" style="left:882px;top:638.94px;font-size:15px;line-height:15px;font-weight:bold;letter-spacing:0.83px;color:#141414;">9.0h</div>
<div class="t" style="left:1132.5px;top:638.94px;font-size:15px;line-height:15px;letter-spacing:0.07px;color:#232832;">Gaubenrahmen West aufgebaut, Schalung begonnen</div>
<svg style="left:1019px;top:640.14px" width="10" height="14" viewBox="0 0 10 14"><rect x="0" y="0" width="10" height="14" rx="1.4" fill="#4b2d85"/><rect x="0" y="0" width="10" height="2.2" rx="1" fill="#5b8ec6"/><rect x="1.8" y="3.2" width="1.7" height="1.7" fill="#f26a35"/><rect x="4.3" y="3.2" width="1.7" height="1.7" fill="#3aa6f0"/><rect x="6.8" y="3.2" width="1.7" height="1.7" fill="#f7b73c"/><rect x="1.8" y="6.0" width="1.7" height="1.7" fill="#3aa6f0"/><rect x="4.3" y="6.0" width="1.7" height="1.7" fill="#f7b73c"/><rect x="6.8" y="6.0" width="1.7" height="1.7" fill="#f26a35"/><rect x="1.8" y="8.8" width="1.7" height="1.7" fill="#f7a03c"/><rect x="4.3" y="8.8" width="1.7" height="1.7" fill="#3aa6f0"/><rect x="6.8" y="8.8" width="1.7" height="1.7" fill="#f7b73c"/></svg>
<svg style="left:1775.5px;top:641.84px" width="11" height="11" viewBox="0 0 11 11"><path d="M0.2 2.5 L2.5 0.2 L10.1 7.8 L7.8 10.1Z" fill="#48484d"/><path d="M0.2 2.5 Q-.3 1.2 .5 .5 Q1.2 -.3 2.5 .2 L3.3 1 L1 3.3Z" fill="#2e2e33"/><path d="M7.8 10.1 L10.1 7.8 L10.9 10.9Z" fill="#3a5a7a"/></svg>
<svg style="left:1817.6px;top:641.24px" width="7.2" height="11" viewBox="0 0 7.2 11"><path d="M0.6 2 Q0.6 .2 3.6 .2 Q6.6 .2 6.6 2 V9.6 Q6.6 10.9 3.6 10.9 Q0.6 10.9 0.6 9.6Z" fill="#c62828"/><path d="M0.2 2.2 Q0.6 .9 3.6 .9 Q6.6 .9 7 2.2 L6.8 2.7 Q3.6 2 .4 2.7Z" fill="#d94a4a"/><rect x="2.2" y="3.4" width="2.8" height="6.4" rx=".6" fill="#dd7777" opacity=".75"/></svg>

<div class="abs" style="left:1805px;top:630.04px;width:33px;height:33px;border:1px solid #d98c8c;border-top:2px solid #dea0a0;border-radius:4px"></div>
<div class="abs" style="left:334px;top:738.86px;width:1520px;height:1px;background:#e1e4ea"></div>
<div class="t" style="left:350px;top:700.71px;font-size:16px;line-height:16px;letter-spacing:1.07px;color:#232832;">2026-04-02</div>
<div class="t" style="left:494px;top:700.36px;font-size:15px;line-height:15px;letter-spacing:-0.23px;color:#232832;">Lisa Hartmann</div>
<div class="t" style="left:653px;top:700.71px;font-size:16px;line-height:16px;letter-spacing:0.9px;color:#232832;">08:00:00</div>
<div class="t" style="left:770.5px;top:700.71px;font-size:16px;line-height:16px;letter-spacing:-0.03px;color:#232832;">17:00:00</div>
<div class="t" style="left:882px;top:700.36px;font-size:15px;line-height:15px;font-weight:bold;letter-spacing:0.9px;color:#141414;">8.0h</div>
<div class="t" style="left:1132.5px;top:700.36px;font-size:15px;line-height:15px;letter-spacing:0.01px;color:#232832;">Aufmass Dachfenster mit Marco abgestimmt, Statik Mueller nachgehakt</div>
<svg style="left:1016.8px;top:701.26px" width="15.5" height="15.5" viewBox="0 0 15.5 15.5"><g transform="translate(0.3,0.3)"><path d="M4.9 13.06 L1.94 10.1 L9.72 2.32 L12.68 5.28Z" fill="#ef7d2e"/><path d="M3.4 11.6 L11.2 3.8" stroke="#f59a52" stroke-width=".9"/><path d="M9.72 2.32 L10.57 1.47 L13.53 4.43 L12.68 5.28Z" fill="#f1eef4"/><path d="M10.57 1.47 L11.6 .44 Q12.2 -.1 12.8 .5 L14.5 2.2 Q15.1 2.8 14.56 3.4 L13.53 4.43Z" fill="#e8622a"/><path d="M4.9 13.06 L1.94 10.1 L1.0 14.0Z" fill="#f3c594"/><path d="M1.6 12.6 L2.4 13.4 L1.0 14.0Z" fill="#555"/></g></svg>
<svg style="left:1775.5px;top:703.26px" width="11" height="11" viewBox="0 0 11 11"><path d="M0.2 2.5 L2.5 0.2 L10.1 7.8 L7.8 10.1Z" fill="#48484d"/><path d="M0.2 2.5 Q-.3 1.2 .5 .5 Q1.2 -.3 2.5 .2 L3.3 1 L1 3.3Z" fill="#2e2e33"/><path d="M7.8 10.1 L10.1 7.8 L10.9 10.9Z" fill="#3a5a7a"/></svg>
<svg style="left:1817.6px;top:702.66px" width="7.2" height="11" viewBox="0 0 7.2 11"><path d="M0.6 2 Q0.6 .2 3.6 .2 Q6.6 .2 6.6 2 V9.6 Q6.6 10.9 3.6 10.9 Q0.6 10.9 0.6 9.6Z" fill="#c62828"/><path d="M0.2 2.2 Q0.6 .9 3.6 .9 Q6.6 .9 7 2.2 L6.8 2.7 Q3.6 2 .4 2.7Z" fill="#d94a4a"/><rect x="2.2" y="3.4" width="2.8" height="6.4" rx=".6" fill="#dd7777" opacity=".75"/></svg>

<div class="abs" style="left:1805px;top:691.46px;width:33px;height:33px;border:1px solid #d98c8c;border-top:2px solid #dea0a0;border-radius:4px"></div>
<div class="abs" style="left:334px;top:800.28px;width:1520px;height:1px;background:#e1e4ea"></div>
<div class="t" style="left:350px;top:762.13px;font-size:16px;line-height:16px;letter-spacing:1.07px;color:#232832;">2026-04-02</div>
<div class="t" style="left:494px;top:761.78px;font-size:15px;line-height:15px;letter-spacing:-0.26px;color:#232832;">Tim Scholz</div>
<div class="t" style="left:653px;top:762.13px;font-size:16px;line-height:16px;letter-spacing:0.76px;color:#232832;">07:00:00</div>
<div class="t" style="left:770.5px;top:762.13px;font-size:16px;line-height:16px;letter-spacing:-0.1px;color:#232832;">16:30:00</div>
<div class="t" style="left:882px;top:761.78px;font-size:15px;line-height:15px;font-weight:bold;letter-spacing:0.83px;color:#141414;">9.0h</div>
<div class="t" style="left:1132.5px;top:761.78px;font-size:15px;line-height:15px;letter-spacing:0.09px;color:#232832;">Gaubenrahmen Ost aufgebaut, Schalung fertig</div>
<svg style="left:1019px;top:762.98px" width="10" height="14" viewBox="0 0 10 14"><rect x="0" y="0" width="10" height="14" rx="1.4" fill="#4b2d85"/><rect x="0" y="0" width="10" height="2.2" rx="1" fill="#5b8ec6"/><rect x="1.8" y="3.2" width="1.7" height="1.7" fill="#f26a35"/><rect x="4.3" y="3.2" width="1.7" height="1.7" fill="#3aa6f0"/><rect x="6.8" y="3.2" width="1.7" height="1.7" fill="#f7b73c"/><rect x="1.8" y="6.0" width="1.7" height="1.7" fill="#3aa6f0"/><rect x="4.3" y="6.0" width="1.7" height="1.7" fill="#f7b73c"/><rect x="6.8" y="6.0" width="1.7" height="1.7" fill="#f26a35"/><rect x="1.8" y="8.8" width="1.7" height="1.7" fill="#f7a03c"/><rect x="4.3" y="8.8" width="1.7" height="1.7" fill="#3aa6f0"/><rect x="6.8" y="8.8" width="1.7" height="1.7" fill="#f7b73c"/></svg>
<svg style="left:1775.5px;top:764.6800000000001px" width="11" height="11" viewBox="0 0 11 11"><path d="M0.2 2.5 L2.5 0.2 L10.1 7.8 L7.8 10.1Z" fill="#48484d"/><path d="M0.2 2.5 Q-.3 1.2 .5 .5 Q1.2 -.3 2.5 .2 L3.3 1 L1 3.3Z" fill="#2e2e33"/><path d="M7.8 10.1 L10.1 7.8 L10.9 10.9Z" fill="#3a5a7a"/></svg>
<svg style="left:1817.6px;top:764.08px" width="7.2" height="11" viewBox="0 0 7.2 11"><path d="M0.6 2 Q0.6 .2 3.6 .2 Q6.6 .2 6.6 2 V9.6 Q6.6 10.9 3.6 10.9 Q0.6 10.9 0.6 9.6Z" fill="#c62828"/><path d="M0.2 2.2 Q0.6 .9 3.6 .9 Q6.6 .9 7 2.2 L6.8 2.7 Q3.6 2 .4 2.7Z" fill="#d94a4a"/><rect x="2.2" y="3.4" width="2.8" height="6.4" rx=".6" fill="#dd7777" opacity=".75"/></svg>

<div class="abs" style="left:1805px;top:752.88px;width:33px;height:33px;border:1px solid #d98c8c;border-top:2px solid #dea0a0;border-radius:4px"></div>
<div class="abs" style="left:334px;top:861.70px;width:1520px;height:1px;background:#e1e4ea"></div>
<div class="t" style="left:350px;top:823.55px;font-size:16px;line-height:16px;letter-spacing:1.07px;color:#232832;">2026-04-03</div>
<div class="t" style="left:494px;top:823.20px;font-size:15px;line-height:15px;letter-spacing:-0.23px;color:#232832;">Lisa Hartmann</div>
<div class="t" style="left:653px;top:823.55px;font-size:16px;line-height:16px;letter-spacing:0.9px;color:#232832;">08:00:00</div>
<div class="t" style="left:770.5px;top:823.55px;font-size:16px;line-height:16px;letter-spacing:0.11px;color:#232832;">16:00:00</div>
<div class="t" style="left:882px;top:823.20px;font-size:15px;line-height:15px;font-weight:bold;letter-spacing:0.66px;color:#141414;">7.3h</div>
<div class="t" style="left:1132.5px;top:823.20px;font-size:15px;line-height:15px;letter-spacing:0.13px;color:#232832;">Holzlieferung Cordes verschoben, Alternativlieferant geprueft</div>
<svg style="left:1016.8px;top:824.1px" width="15.5" height="15.5" viewBox="0 0 15.5 15.5"><g transform="translate(0.3,0.3)"><path d="M4.9 13.06 L1.94 10.1 L9.72 2.32 L12.68 5.28Z" fill="#ef7d2e"/><path d="M3.4 11.6 L11.2 3.8" stroke="#f59a52" stroke-width=".9"/><path d="M9.72 2.32 L10.57 1.47 L13.53 4.43 L12.68 5.28Z" fill="#f1eef4"/><path d="M10.57 1.47 L11.6 .44 Q12.2 -.1 12.8 .5 L14.5 2.2 Q15.1 2.8 14.56 3.4 L13.53 4.43Z" fill="#e8622a"/><path d="M4.9 13.06 L1.94 10.1 L1.0 14.0Z" fill="#f3c594"/><path d="M1.6 12.6 L2.4 13.4 L1.0 14.0Z" fill="#555"/></g></svg>
<svg style="left:1775.5px;top:826.1px" width="11" height="11" viewBox="0 0 11 11"><path d="M0.2 2.5 L2.5 0.2 L10.1 7.8 L7.8 10.1Z" fill="#48484d"/><path d="M0.2 2.5 Q-.3 1.2 .5 .5 Q1.2 -.3 2.5 .2 L3.3 1 L1 3.3Z" fill="#2e2e33"/><path d="M7.8 10.1 L10.1 7.8 L10.9 10.9Z" fill="#3a5a7a"/></svg>
<svg style="left:1817.6px;top:825.5px" width="7.2" height="11" viewBox="0 0 7.2 11"><path d="M0.6 2 Q0.6 .2 3.6 .2 Q6.6 .2 6.6 2 V9.6 Q6.6 10.9 3.6 10.9 Q0.6 10.9 0.6 9.6Z" fill="#c62828"/><path d="M0.2 2.2 Q0.6 .9 3.6 .9 Q6.6 .9 7 2.2 L6.8 2.7 Q3.6 2 .4 2.7Z" fill="#d94a4a"/><rect x="2.2" y="3.4" width="2.8" height="6.4" rx=".6" fill="#dd7777" opacity=".75"/></svg>

<div class="abs" style="left:1805px;top:814.30px;width:33px;height:33px;border:1px solid #d98c8c;border-top:2px solid #dea0a0;border-radius:4px"></div>
<div class="abs" style="left:334px;top:923.12px;width:1520px;height:1px;background:#e1e4ea"></div>
<div class="t" style="left:350px;top:884.97px;font-size:16px;line-height:16px;letter-spacing:1.07px;color:#232832;">2026-04-03</div>
<div class="t" style="left:494px;top:884.62px;font-size:15px;line-height:15px;letter-spacing:-0.26px;color:#232832;">Tim Scholz</div>
<div class="t" style="left:653px;top:884.97px;font-size:16px;line-height:16px;letter-spacing:0.76px;color:#232832;">07:00:00</div>
<div class="t" style="left:770.5px;top:884.97px;font-size:16px;line-height:16px;letter-spacing:0.11px;color:#232832;">16:00:00</div>
<div class="t" style="left:882px;top:884.62px;font-size:15px;line-height:15px;font-weight:bold;letter-spacing:0.83px;color:#141414;">8.5h</div>
<div class="t" style="left:1132.5px;top:884.62px;font-size:15px;line-height:15px;letter-spacing:0.07px;color:#232832;">Dachlatten + Konterlattung Gaube West, Abweichung festgestellt</div>
<svg style="left:1019px;top:885.8199999999999px" width="10" height="14" viewBox="0 0 10 14"><rect x="0" y="0" width="10" height="14" rx="1.4" fill="#4b2d85"/><rect x="0" y="0" width="10" height="2.2" rx="1" fill="#5b8ec6"/><rect x="1.8" y="3.2" width="1.7" height="1.7" fill="#f26a35"/><rect x="4.3" y="3.2" width="1.7" height="1.7" fill="#3aa6f0"/><rect x="6.8" y="3.2" width="1.7" height="1.7" fill="#f7b73c"/><rect x="1.8" y="6.0" width="1.7" height="1.7" fill="#3aa6f0"/><rect x="4.3" y="6.0" width="1.7" height="1.7" fill="#f7b73c"/><rect x="6.8" y="6.0" width="1.7" height="1.7" fill="#f26a35"/><rect x="1.8" y="8.8" width="1.7" height="1.7" fill="#f7a03c"/><rect x="4.3" y="8.8" width="1.7" height="1.7" fill="#3aa6f0"/><rect x="6.8" y="8.8" width="1.7" height="1.7" fill="#f7b73c"/></svg>
<svg style="left:1775.5px;top:887.52px" width="11" height="11" viewBox="0 0 11 11"><path d="M0.2 2.5 L2.5 0.2 L10.1 7.8 L7.8 10.1Z" fill="#48484d"/><path d="M0.2 2.5 Q-.3 1.2 .5 .5 Q1.2 -.3 2.5 .2 L3.3 1 L1 3.3Z" fill="#2e2e33"/><path d="M7.8 10.1 L10.1 7.8 L10.9 10.9Z" fill="#3a5a7a"/></svg>
<svg style="left:1817.6px;top:886.92px" width="7.2" height="11" viewBox="0 0 7.2 11"><path d="M0.6 2 Q0.6 .2 3.6 .2 Q6.6 .2 6.6 2 V9.6 Q6.6 10.9 3.6 10.9 Q0.6 10.9 0.6 9.6Z" fill="#c62828"/><path d="M0.2 2.2 Q0.6 .9 3.6 .9 Q6.6 .9 7 2.2 L6.8 2.7 Q3.6 2 .4 2.7Z" fill="#d94a4a"/><rect x="2.2" y="3.4" width="2.8" height="6.4" rx=".6" fill="#dd7777" opacity=".75"/></svg>

<div class="abs" style="left:1805px;top:875.72px;width:33px;height:33px;border:1px solid #d98c8c;border-top:2px solid #dea0a0;border-radius:4px"></div>
<div class="abs" style="left:334px;top:984.54px;width:1520px;height:1px;background:#e1e4ea"></div>
<div class="t" style="left:350px;top:946.39px;font-size:16px;line-height:16px;letter-spacing:1.12px;color:#232832;">2026-04-04</div>
<div class="t" style="left:494px;top:946.04px;font-size:15px;line-height:15px;letter-spacing:-0.25px;color:#232832;">Anna Kremer</div>
<div class="t" style="left:653px;top:946.39px;font-size:16px;line-height:16px;letter-spacing:0.9px;color:#232832;">08:00:00</div>
<div class="t" style="left:770.5px;top:946.39px;font-size:16px;line-height:16px;letter-spacing:0.04px;color:#232832;">12:00:00</div>
<div class="t" style="left:882px;top:946.04px;font-size:15px;line-height:15px;font-weight:bold;letter-spacing:0.9px;color:#141414;">4.0h</div>
<div class="t" style="left:1132.5px;top:946.04px;font-size:15px;line-height:15px;letter-spacing:0.07px;color:#232832;">Rechnungen geschrieben, Lieferscheine Cordes abgelegt</div>
<svg style="left:1016.8px;top:946.94px" width="15.5" height="15.5" viewBox="0 0 15.5 15.5"><g transform="translate(0.3,0.3)"><path d="M4.9 13.06 L1.94 10.1 L9.72 2.32 L12.68 5.28Z" fill="#ef7d2e"/><path d="M3.4 11.6 L11.2 3.8" stroke="#f59a52" stroke-width=".9"/><path d="M9.72 2.32 L10.57 1.47 L13.53 4.43 L12.68 5.28Z" fill="#f1eef4"/><path d="M10.57 1.47 L11.6 .44 Q12.2 -.1 12.8 .5 L14.5 2.2 Q15.1 2.8 14.56 3.4 L13.53 4.43Z" fill="#e8622a"/><path d="M4.9 13.06 L1.94 10.1 L1.0 14.0Z" fill="#f3c594"/><path d="M1.6 12.6 L2.4 13.4 L1.0 14.0Z" fill="#555"/></g></svg>
<svg style="left:1775.5px;top:948.94px" width="11" height="11" viewBox="0 0 11 11"><path d="M0.2 2.5 L2.5 0.2 L10.1 7.8 L7.8 10.1Z" fill="#48484d"/><path d="M0.2 2.5 Q-.3 1.2 .5 .5 Q1.2 -.3 2.5 .2 L3.3 1 L1 3.3Z" fill="#2e2e33"/><path d="M7.8 10.1 L10.1 7.8 L10.9 10.9Z" fill="#3a5a7a"/></svg>
<svg style="left:1817.6px;top:948.34px" width="7.2" height="11" viewBox="0 0 7.2 11"><path d="M0.6 2 Q0.6 .2 3.6 .2 Q6.6 .2 6.6 2 V9.6 Q6.6 10.9 3.6 10.9 Q0.6 10.9 0.6 9.6Z" fill="#c62828"/><path d="M0.2 2.2 Q0.6 .9 3.6 .9 Q6.6 .9 7 2.2 L6.8 2.7 Q3.6 2 .4 2.7Z" fill="#d94a4a"/><rect x="2.2" y="3.4" width="2.8" height="6.4" rx=".6" fill="#dd7777" opacity=".75"/></svg>

<div class="abs" style="left:1805px;top:937.14px;width:33px;height:33px;border:1px solid #d98c8c;border-top:2px solid #dea0a0;border-radius:4px"></div>
<div class="abs" style="left:1846px;top:903px;width:57px;height:57px;border-radius:50%;background:#df5216;box-shadow:0 4px 10px rgba(0,0,0,.18)"></div>
<svg style="left:1848.5px;top:911px" width="50" height="38" viewBox="0 0 50 38"><path d="M6.9 28.2 Q6.3 6 27 5.5 Q46 6.5 46.8 27.5 Q27 31 6.9 28.2Z" fill="#fff"/><path d="M0.7 31.5 Q2 29 7.5 28.2 Q27 31.2 48.4 27.2 Q48.9 29 46.5 30.2 Q33 34 20 36 Q7 37 0.7 31.5Z" fill="#fff"/><path d="M23.8 6.8 Q18 11 17 17.5 Q15.6 23 16.3 30" stroke="#df5216" stroke-width="1.1" fill="none"/><path d="M7.5 28.4 Q27 31.4 48 27.4" stroke="#df5216" stroke-width=".9" fill="none"/><path d="M27 12 Q31 14 30 19 M34 10 Q37 16 41 18 M29 22 Q34 24 38 22" stroke="#f4d3c4" stroke-width=".5" fill="none"/></svg>

</body></html>
